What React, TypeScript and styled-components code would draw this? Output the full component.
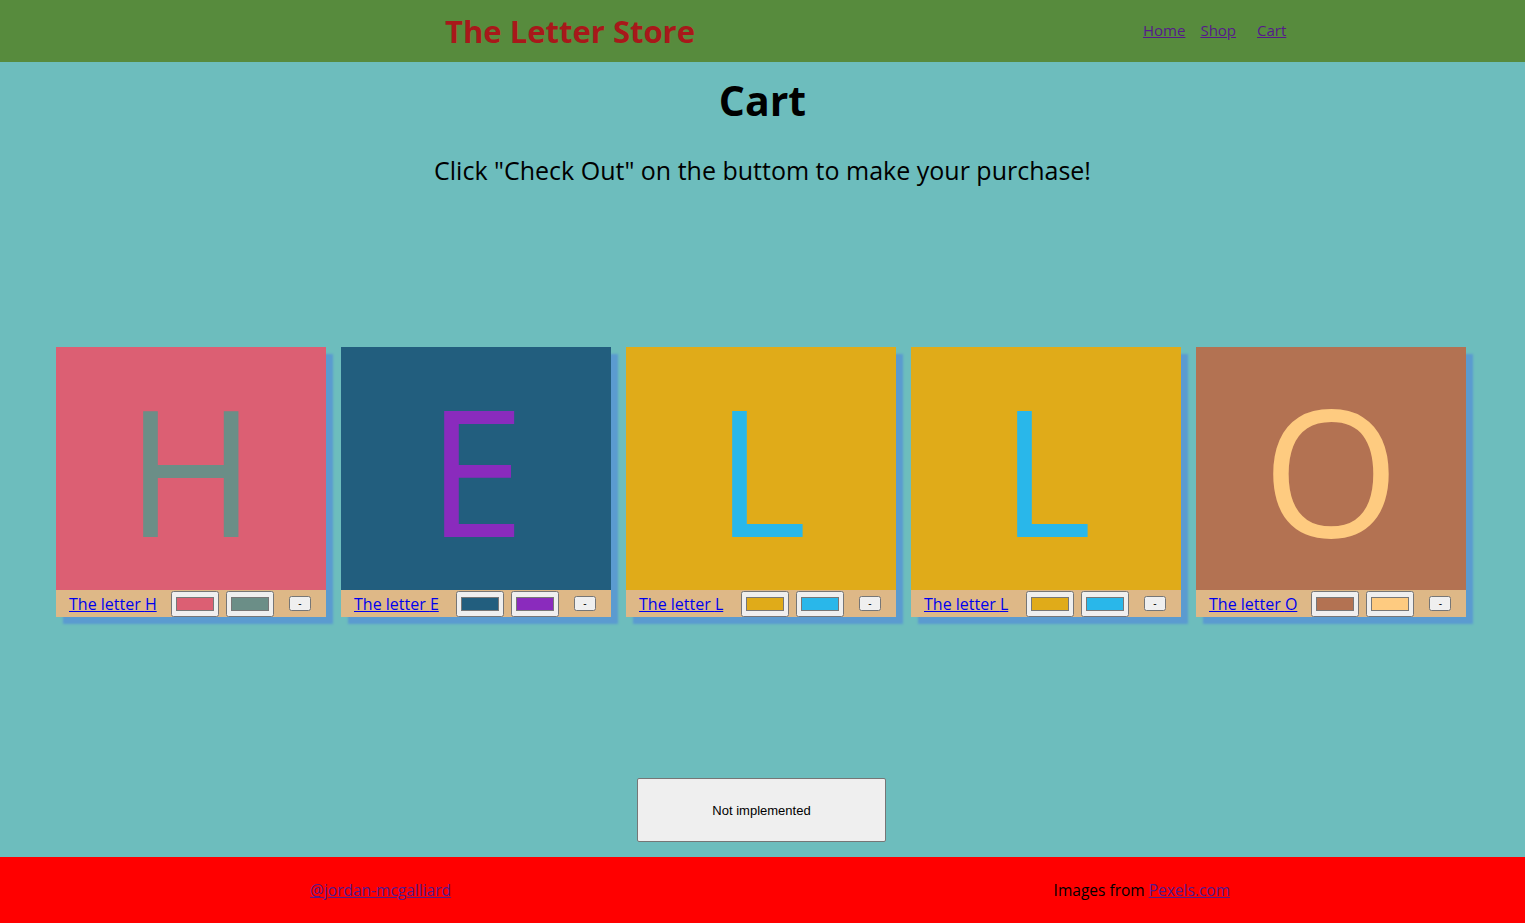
import * as React from 'react';
import styled, {createGlobalStyle} from 'styled-components';

const GlobalStyle = createGlobalStyle`
    body {
        margin: 0;
        background: #6dbdbd;
        font-family: "Open Sans", "Noto Sans", sans-serif;
    }
`;

const Page = styled.div`
    display: flex;
    flex-direction: column;
    min-height: 923px;
`;

const Header = styled.header`
    display: flex;
    align-items: center;
    height: 62px;
    background: #578b3d;
    padding: 0 0 0 445px;
`;

const Title = styled.h2`
    margin: 0;
    color: #a8181a;
    font-size: 31px;
    font-weight: 700;
    flex: 0 0 auto;
`;

const Nav = styled.nav`
    display: flex;
    gap: 15px;
    margin-left: 448px;
    padding-bottom: 2px;
`;

const NavLink = styled.a<{ wide?: boolean }>`
    color: #551a8b;
    font-size: 15px;
    margin-left: ${(p) => p.wide ? "6px" : "0"};
`;

const Main = styled.main`
    flex: 1;
    display: flex;
    flex-direction: column;
    align-items: center;
`;

const Heading = styled.h1`
    margin: 10px 0 0;
    font-size: 41px;
    font-weight: 700;
    color: #000;
`;

const Sub = styled.p`
    margin: 25px 0 0;
    font-size: 25px;
    color: #000;
`;

const Row = styled.div`
    display: flex;
    gap: 15px;
    margin-top: 160px;
    margin-right: 3px;
`;

const Card = styled.div`
    width: 270px;
    box-shadow: 7px 7px 2px #5b9bd0;
`;

const Tile = styled.div<{ bg: string; fg: string }>`
    height: 243px;
    background: ${(p) => p.bg};
    color: ${(p) => p.fg};
    display: flex;
    align-items: center;
    justify-content: center;
    font-size: 176px;
    font-weight: 400;
    line-height: 1;
`;

const CardFoot = styled.div`
    height: 27px;
    background: #deb887;
    display: flex;
    align-items: center;
    padding-left: 13px;
    gap: 7px;
`;

const ItemLink = styled.a`
    color: #0000ee;
    font-size: 16px;
    margin-right: 7px;
    min-width: 88px;
`;

const Swatch = styled.input`
    width: 48px;
    height: 26px;
    margin: 0;
    padding: 1px 2px;
    box-sizing: border-box;
`;

const MinusBtn = styled.button`
    margin-left: 8px;
    width: 22px;
    height: 15px;
    padding: 0;
    font-size: 10px;
    line-height: 1;
    font-family: "Liberation Sans", Arial, sans-serif;
`;

const CheckOut = styled.button`
    margin-top: 161px;
    margin-right: 2px;
    width: 249px;
    height: 64px;
    font-family: "Liberation Sans", Arial, sans-serif;
    font-size: 13px;
    background: #efefef;
    border: 1px solid #767676;
    border-radius: 2px;
    color: #000;
`;

const Footer = styled.footer`
    margin-top: 15px;
    height: 66px;
    background: #ff0000;
    display: flex;
    align-items: center;
    font-size: 16px;
`;

const FootLink = styled.a`
    color: #551a8b;
`;

const FootLeft = styled.div`
    margin-left: 310px;
    font-size: 15.5px;
`;

const FootRight = styled.div`
    margin-left: auto;
    margin-right: 295px;
    font-size: 15.5px;
    color: #000;
`;

const letters = [
    {ch: "H", bg: "#dc5f73", fg: "#6b8e87"},
    {ch: "E", bg: "#225e7e", fg: "#8a2bbd"},
    {ch: "L", bg: "#e0ab19", fg: "#29b7ea"},
    {ch: "L", bg: "#e0ab19", fg: "#29b7ea"},
    {ch: "O", bg: "#b37252", fg: "#fecb80"},
];

export default function App() {
    return (
        <Page>
            <GlobalStyle/>
            <Header>
                <Title>The Letter Store</Title>
                <Nav>
                    <NavLink href="#">Home</NavLink>
                    <NavLink href="#">Shop</NavLink>
                    <NavLink href="#" wide>Cart</NavLink>
                </Nav>
            </Header>
            <Main>
                <Heading>Cart</Heading>
                <Sub>Click "Check Out" on the buttom to make your purchase!</Sub>
                <Row>
                    {letters.map((l, i) => (
                        <Card key={i}>
                            <Tile bg={l.bg} fg={l.fg}>{l.ch}</Tile>
                            <CardFoot>
                                <ItemLink href="#">The letter {l.ch}</ItemLink>
                                <Swatch type="color" defaultValue={l.bg}/>
                                <Swatch type="color" defaultValue={l.fg}/>
                                <MinusBtn>-</MinusBtn>
                            </CardFoot>
                        </Card>
                    ))}
                </Row>
                <CheckOut>Not implemented</CheckOut>
            </Main>
            <Footer>
                <FootLeft><FootLink href="#">@jordan-mcgalliard</FootLink></FootLeft>
                <FootRight>Images from <FootLink href="#">Pexels.com</FootLink></FootRight>
            </Footer>
        </Page>
    );
}
